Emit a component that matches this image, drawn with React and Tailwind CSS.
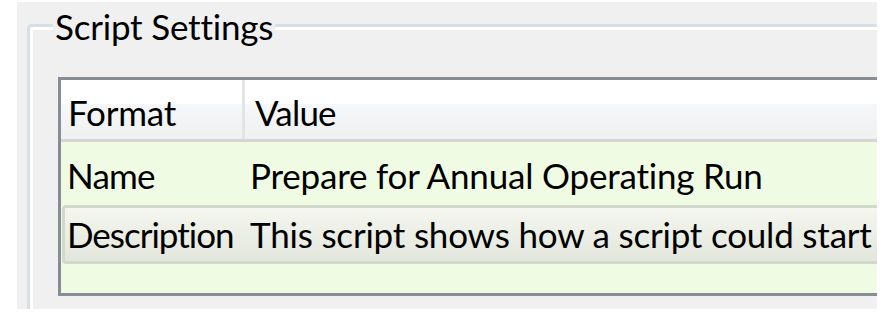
export default function App() {
  const font = "font-['Lato',_sans-serif] text-[35px] leading-[35px] text-black tracking-[-0.2px] [font-variant-ligatures:none]";
  return (
    <div className={`w-[896px] h-[321px] bg-white pl-[17px] pt-[2px] ${font}`}>
      <div className="w-[860px] h-[307px] bg-[#f0f0f0] overflow-hidden pl-[10px] pt-[22px]">
        <div className="relative w-[1000px] h-[400px] border-[3px] border-[#d5dfe5] rounded-[5px]">
          <div className="h-full border-[3px] border-white rounded-[3px] pl-[25px] pt-[47px]">
            <div className="w-[1000px] h-[219px] border-[3px] border-[#878c95] flex flex-col">
              {/* header */}
              <div className="flex h-[62px] border-b-[3px] border-[#d5d5d5] bg-[linear-gradient(to_bottom,#ffffff_0,#ffffff_24px,#f6f7f8_24px,#eef0f2_100%)]">
                <div className="w-[184px] pl-[7px] pt-[15px] border-r-[3px] border-[#e2e4e6]">Format</div>
                <div className="pl-[10px] pt-[15px] tracking-[-0.8px]">Value</div>
              </div>
              {/* body */}
              <div className="flex-1 bg-[#f0fbe3] flex flex-col">
                <div className="flex h-[63px] pt-[16px]">
                  <div className="w-[184px] pl-[6px] tracking-[-0.8px]">Name</div>
                  <div className="pl-[5px] whitespace-nowrap">Prepare for Annual Operating Run</div>
                </div>
                <div className="ml-[1px] h-[59px] flex border-[3px] border-[#d3d8cc] rounded-[4px] bg-[linear-gradient(to_bottom,#f5f7f0,#e2e6db)] pt-[9px]">
                  <div className="w-[180px] pl-[2px] tracking-[-1px]">Description</div>
                  <div className="pl-[5px] whitespace-nowrap">This script shows how a script could start to prepare</div>
                </div>
              </div>
            </div>
          </div>
          <span className="absolute left-[23px] top-[-18px] bg-[#f0f0f0] px-[2px]">Script Settings</span>
        </div>
      </div>
    </div>
  );
}
